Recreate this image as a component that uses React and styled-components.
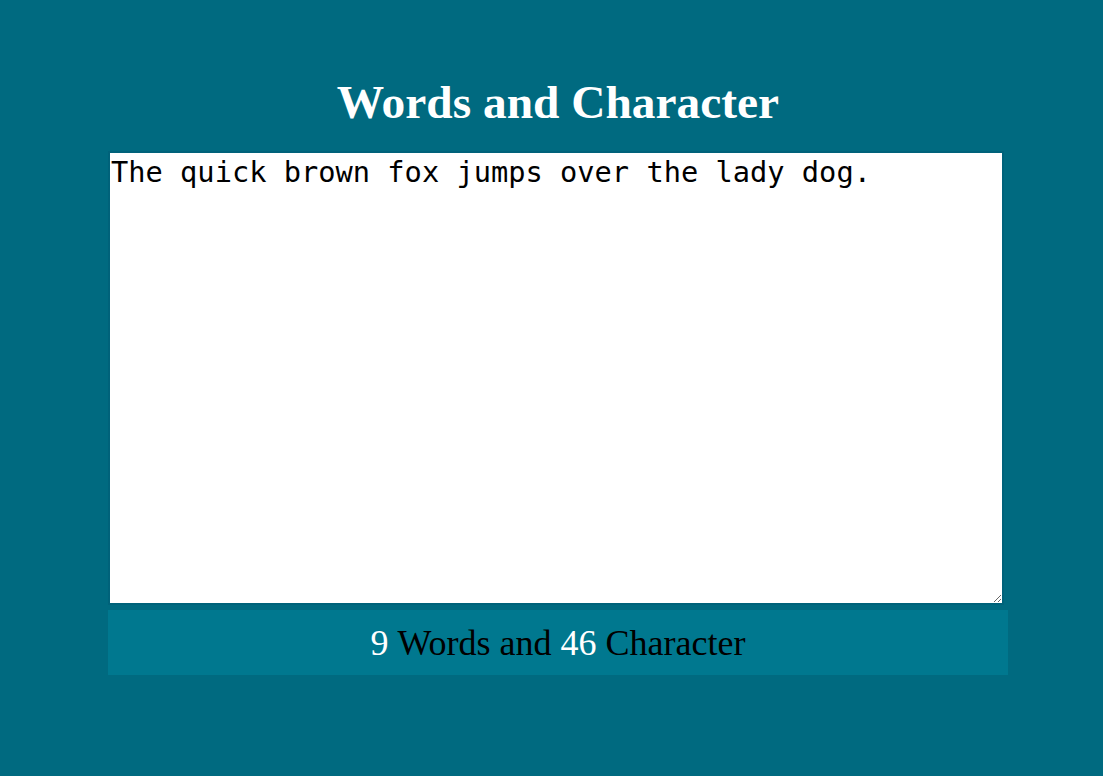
import { useState } from "react";
import styled, { createGlobalStyle } from "styled-components";

const GlobalStyle = createGlobalStyle`
    html, body {
        margin: 0;
        padding: 0;
        background: #006a80;
        min-height: 100%;
    }
`;

export default function App() {
    const [text, setText] = useState(
        "The quick brown fox jumps over the lady dog."
    );

    const words = text.split(/\s+/).filter((w) => w.length > 0).length;
    const characters = text.length + 2;

    return (
        <Page>
            <GlobalStyle />
            <Container>
                <Title>Words and Character</Title>
                <TextBox
                    value={text}
                    onChange={(e) => setText(e.target.value)}
                    spellCheck={false}
                />
                <Counter>
                    <Number>{words}</Number>
                    &nbsp;Words and&nbsp;
                    <Number>{characters}</Number>
                    &nbsp;Character
                </Counter>
            </Container>
        </Page>
    );
}

const Page = styled.div`
    min-height: 100vh;
    background: #006a80;
    padding-top: 75px;
    box-sizing: border-box;
`;

const Container = styled.div`
    width: 900px;
    margin-left: 108px;
    display: flex;
    flex-direction: column;
    align-items: flex-start;
`;

const Title = styled.h1`
    align-self: stretch;
    margin: 0 0 21px;
    text-align: center;
    font-family: "Liberation Serif", "Times New Roman", serif;
    font-weight: 700;
    font-size: 47.4px;
    line-height: 55px;
    color: #fff;
`;

const TextBox = styled.textarea`
    width: 896px;
    height: 454px;
    box-sizing: border-box;
    margin: 0;
    padding: 0 1px;
    border: 2px solid #00627a;
    outline: none;
    background: #fff;
    color: #000;
    font-family: "DejaVu Sans Mono", "Liberation Mono", monospace;
    font-size: 28.7px;
    line-height: 38px;
`;

const Counter = styled.div`
    align-self: stretch;
    margin-top: 5px;
    height: 65px;
    background: #00788f;
    display: flex;
    align-items: center;
    justify-content: center;
    font-family: "Liberation Serif", "Times New Roman", serif;
    font-size: 36px;
    color: #000;
`;

const Number = styled.span`
    color: #fff;
`;
